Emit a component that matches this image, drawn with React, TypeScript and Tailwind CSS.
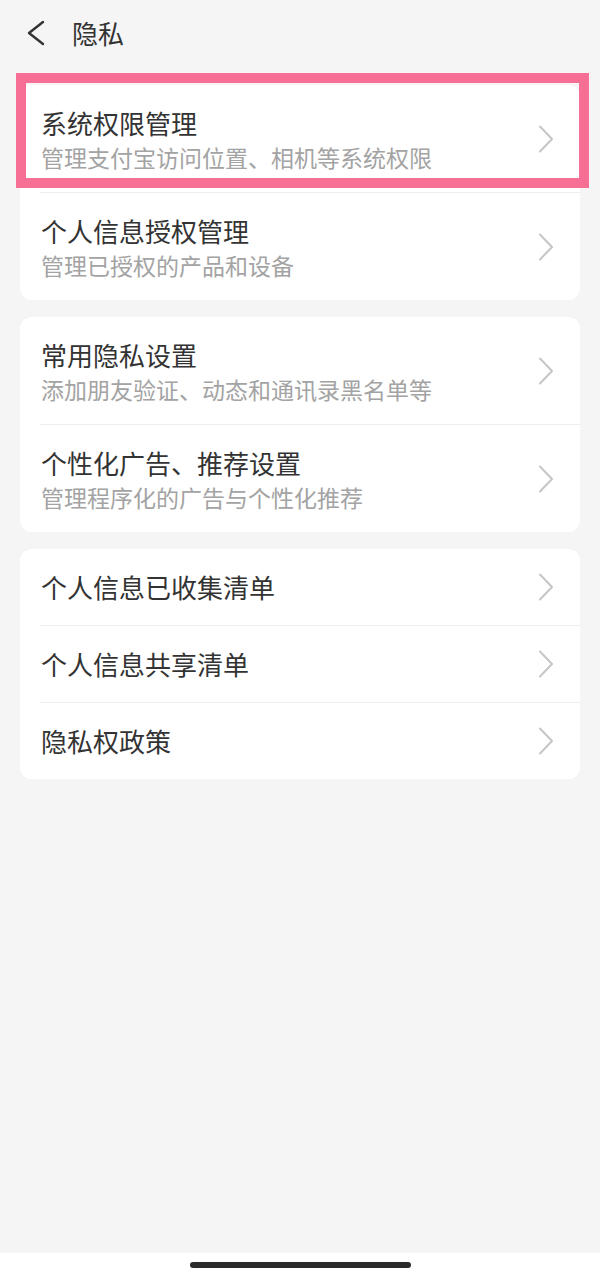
import React from "react";

const font = { fontFamily: '"Noto Sans CJK SC", "Noto Sans", sans-serif' };

function Chevron() {
  return (
    <svg width="16" height="28" viewBox="0 0 16 28" fill="none" className="shrink-0">
      <polyline points="2,1.5 14,14 2,26.5" stroke="#c6c6c6" strokeWidth="2" strokeLinecap="round" strokeLinejoin="round" />
    </svg>
  );
}

function Row({ title, sub }: { title: string; sub?: string }) {
  return (
    <div className={`flex items-center justify-between pl-[21px] pr-[26px] ${sub ? "h-[107px]" : "h-[76px]"}`}>
      <div className="flex flex-col">
        <div className="text-[26px] leading-[36px] text-[#333333]">{title}</div>
        {sub && <div className="text-[23px] leading-[32px] text-[#a3a3a3]">{sub}</div>}
      </div>
      <Chevron />
    </div>
  );
}

function Sep() {
  return <div className="h-px bg-[#efefef] ml-[20px]" />;
}

export default function App() {
  return (
    <div className="relative w-[600px] h-[1277px] bg-[#f5f5f5] flex flex-col" style={font}>
      <div className="h-[66px] flex items-center pl-[27px] shrink-0">
        <svg width="18" height="26" viewBox="0 0 18 26" fill="none">
          <polyline points="16,2 2,13 16,24" stroke="#333333" strokeWidth="2.4" strokeLinecap="round" strokeLinejoin="round" />
        </svg>
        <div className="ml-[27px] text-[26px] leading-[32px] text-[#333333]">隐私</div>
      </div>
      <div className="flex-1 px-[20px] pt-[19px] flex flex-col gap-[17px]">
        <div className="bg-white rounded-[12px]">
          <Row title="系统权限管理" sub="管理支付宝访问位置、相机等系统权限" />
          <Sep />
          <Row title="个人信息授权管理" sub="管理已授权的产品和设备" />
        </div>
        <div className="bg-white rounded-[12px]">
          <Row title="常用隐私设置" sub="添加朋友验证、动态和通讯录黑名单等" />
          <Sep />
          <Row title="个性化广告、推荐设置" sub="管理程序化的广告与个性化推荐" />
        </div>
        <div className="bg-white rounded-[12px]">
          <Row title="个人信息已收集清单" />
          <Sep />
          <Row title="个人信息共享清单" />
          <Sep />
          <Row title="隐私权政策" />
        </div>
      </div>
      <div className="h-[24px] bg-white flex justify-center pt-[9px] shrink-0">
        <div className="w-[221px] h-[6px] rounded-full bg-[#2b2b2b]" />
      </div>
      <div className="absolute left-[16px] top-[73px] w-[573px] h-[115px] border-[10px] border-[#f76f95]" />
    </div>
  );
}
